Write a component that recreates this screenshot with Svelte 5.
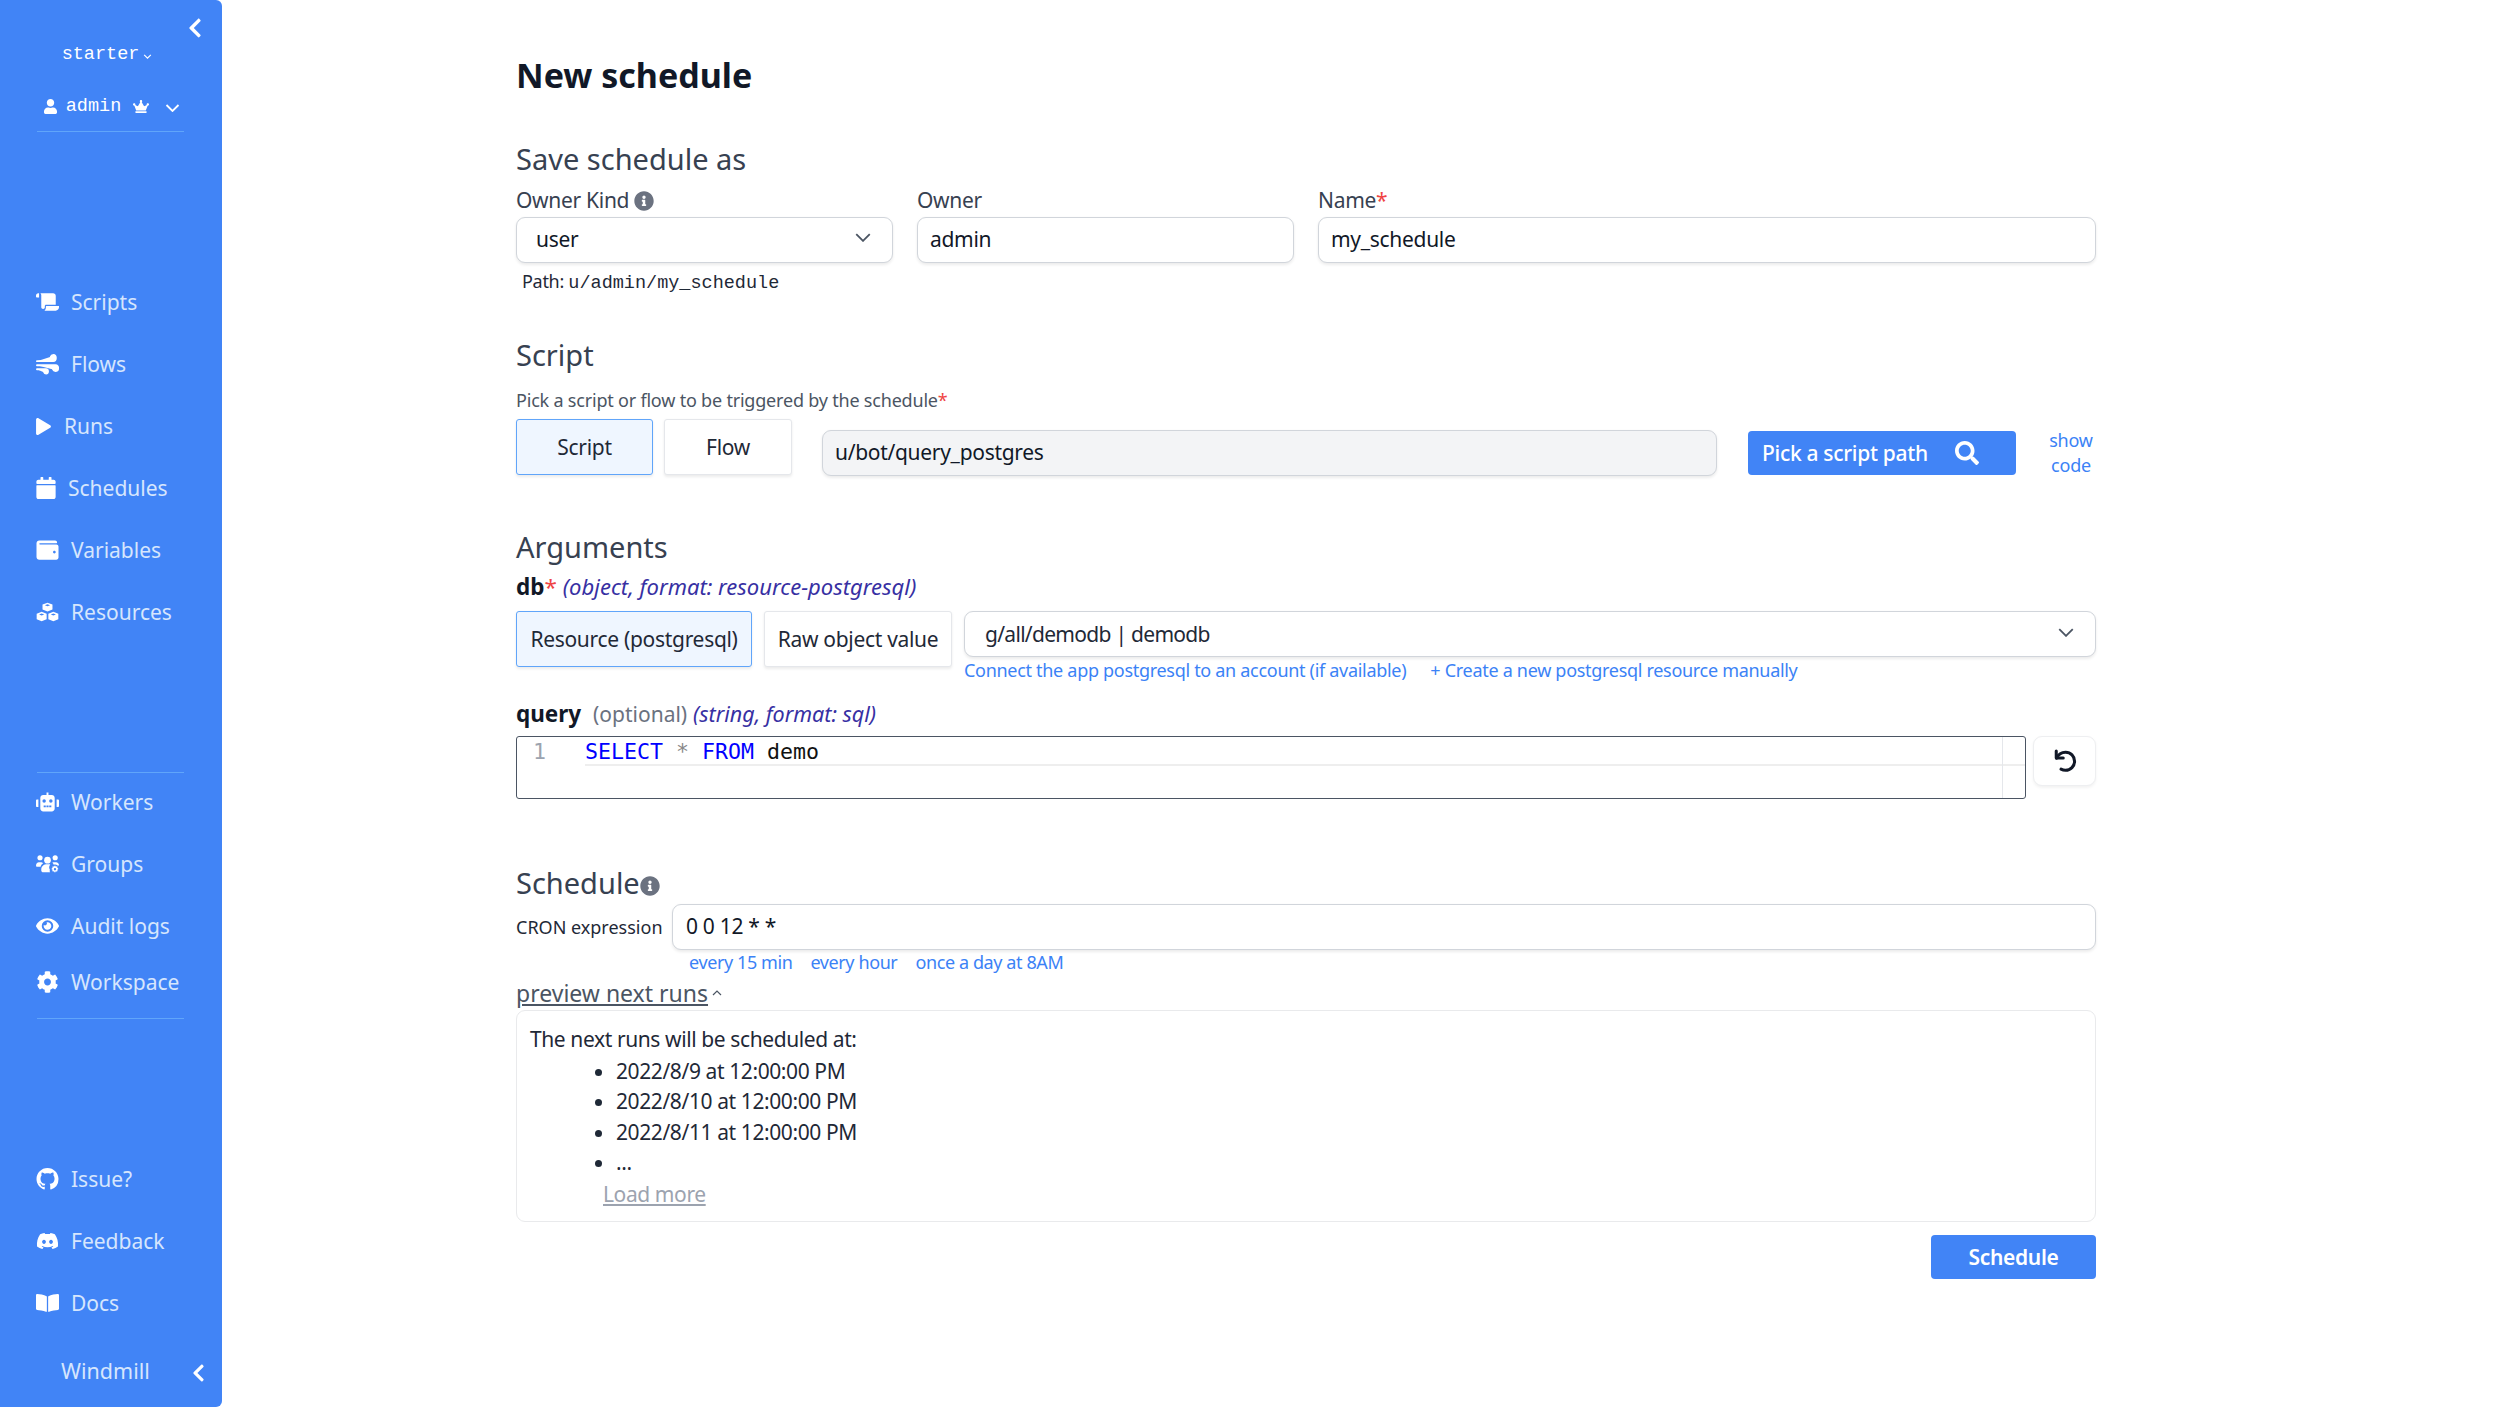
<script>
  const topLinks = [
    { label: 'Scripts', icon: 'scroll' },
    { label: 'Flows', icon: 'wind' },
    { label: 'Runs', icon: 'play' },
    { label: 'Schedules', icon: 'calendar' },
    { label: 'Variables', icon: 'wallet' },
    { label: 'Resources', icon: 'cubes' }
  ];
  const midLinks = [
    { label: 'Workers', icon: 'robot' },
    { label: 'Groups', icon: 'groups' },
    { label: 'Audit logs', icon: 'eye' }
  ];
  const footLinks = [
    { label: 'Issue?', icon: 'github' },
    { label: 'Feedback', icon: 'discord' },
    { label: 'Docs', icon: 'book' }
  ];
  const runs = ['2022/8/9 at 12:00:00 PM', '2022/8/10 at 12:00:00 PM', '2022/8/11 at 12:00:00 PM', '...'];
  const chevronLeft = 'M34.52 239.03L228.87 44.69c9.37-9.37 24.57-9.37 33.94 0l22.67 22.67c9.36 9.36 9.37 24.52.04 33.9L131.49 256l154.02 154.75c9.34 9.38 9.32 24.54-.04 33.9l-22.67 22.67c-9.37 9.37-24.57 9.37-33.94 0L34.52 272.97c-9.37-9.37-9.37-24.57 0-33.94z';
  const info = 'M256 8C119.043 8 8 119.083 8 256c0 136.997 111.043 248 248 248s248-111.003 248-248C504 119.083 392.957 8 256 8zm0 110c23.196 0 42 18.804 42 42s-18.804 42-42 42-42-18.804-42-42 18.804-42 42-42zm56 254c0 6.627-5.373 12-12 12h-88c-6.627 0-12-5.373-12-12v-24c0-6.627 5.373-12 12-12h12v-64h-12c-6.627 0-12-5.373-12-12v-24c0-6.627 5.373-12 12-12h64c6.627 0 12 5.373 12 12v100h12c6.627 0 12 5.373 12 12v24z';
</script>

{#snippet navIcon(name)}
  {#if name === 'scroll'}
    <svg class="nav-icon" viewBox="0 0 24 20"><path d="M0 3.2C0 1.800 1 .8 2.400.8h.8v4.600H1.200C.5 5.400 0 4.900 0 4.200zM4.400.8h13.400c1.600 0 2.800 1.200 2.800 2.800v9.200h-10c-.9 0-1.400.6-1.400 1.400v1.400c0 1-.8 1.800-1.800 1.800s-1.900-.8-1.900-1.800V3c0-.9-.2-1.600-.9-2.200zM10.800 14.200H24v1.400c0 1.900-1.500 3.400-3.400 3.400H8.800c1-.6 1.500-1.700 1.500-3.200v-.7c0-.5.1-.9.5-.9z"/></svg>
  {:else if name === 'wind'}
    <svg class="nav-icon" viewBox="0 0 24 22" fill="none" stroke="#fff" stroke-width="1.900" stroke-linecap="round"><path d="M1 8h17c3.600 0 3.600-6.500.2-6.500-1.500 0-2.400.8-2.700 2M1 12.300h19.400c3.700 0 3.700 6-.1 6-1.300 0-2.100-.6-2.500-1.600M1 16.500h9.400c2.800 0 2.900 4.500.2 4.500-1 0-1.700-.4-2-1.200"/></svg>
  {:else if name === 'play'}
    <svg class="nav-icon play" viewBox="0 0 448 512"><path d="M424.4 214.7L72.4 6.6C43.8-10.3 0 6.1 0 47.9V464c0 37.5 40.7 60.1 72.4 41.3l352-208c31.4-18.5 31.5-64.1 0-82.6z"/></svg>
  {:else if name === 'calendar'}
    <svg class="nav-icon cal" viewBox="0 0 448 512"><path d="M12 192h424c6.6 0 12 5.4 12 12v260c0 26.5-21.5 48-48 48H48c-26.5 0-48-21.5-48-48V204c0-6.6 5.4-12 12-12zm436-44v-36c0-26.5-21.5-48-48-48h-48V12c0-6.6-5.4-12-12-12h-40c-6.6 0-12 5.4-12 12v52H160V12c0-6.6-5.4-12-12-12h-40c-6.6 0-12 5.4-12 12v52H48C21.5 64 0 85.5 0 112v36c0 6.6 5.4 12 12 12h424c6.6 0 12-5.4 12-12z"/></svg>
  {:else if name === 'wallet'}
    <svg class="nav-icon" viewBox="0 0 512 512"><path d="M461.2 128H80c-8.84 0-16-7.16-16-16s7.16-16 16-16h384c8.84 0 16-7.16 16-16 0-26.51-21.49-48-48-48H64C28.65 32 0 60.65 0 96v320c0 35.35 28.65 64 64 64h397.2c28.02 0 50.8-21.53 50.8-48V176c0-26.47-22.78-48-50.8-48zM416 336c-17.67 0-32-14.33-32-32s14.33-32 32-32 32 14.33 32 32-14.33 32-32 32z"/></svg>
  {:else if name === 'cubes'}
    <svg class="nav-icon" viewBox="0 0 24 20"><path d="M12 .3l5.200 2v5.200L12 9.600 6.800 7.500V2.300zM12 2l-2.700 1 2.700 1.100L14.700 3zM5.900 9.800l5.200 2v5.700L5.900 19.700.7 17.500v-5.700zM18.100 9.800l5.200 2v5.700l-5.200 2.200-5.200-2.200v-5.700zM5.900 11.500l-2.700 1 2.700 1.100 2.700-1.100zM18.100 11.500l-2.700 1 2.700 1.100 2.700-1.100z" fill-rule="evenodd"/></svg>
  {:else if name === 'robot'}
    <svg class="nav-icon" viewBox="0 0 24 20"><path d="M11 0h2v2.800h3.500c1.700 0 3 1.300 3 3v11c0 1.700-1.300 3-3 3h-9c-1.700 0-3-1.300-3-3v-11c0-1.700 1.300-3 3-3H11zM8.500 7.200a1.800 1.800 0 100 3.600 1.800 1.800 0 000-3.600zM15.500 7.200a1.800 1.800 0 100 3.600 1.800 1.800 0 000-3.600zM8 13.600v1.800h2.200v-1.800zM10.900 13.600v1.800h2.200v-1.800zM13.800 13.600v1.800H16v-1.800zM0 8.500c0-.7.500-1.200 1.200-1.200h1.300v8H1.200c-.7 0-1.200-.5-1.200-1.200zM24 8.500c0-.7-.5-1.200-1.200-1.200h-1.300v8h1.300c.7 0 1.200-.5 1.200-1.200z" fill-rule="evenodd"/></svg>
  {:else if name === 'groups'}
    <svg class="nav-icon" viewBox="0 0 24 19"><circle cx="4.200" cy="3" r="2.700"/><circle cx="20" cy="3" r="2.700"/><circle cx="12" cy="5.500" r="3.500"/><path d="M0 11.500c0-2.300 1.300-3.700 3-3.700h2.400c.8 0 1.400.3 2 .8-1.400.9-2.300 2.200-2.600 3.800H1c-.6 0-1-.4-1-.9zM8 10.500c.7-.5 1.600-.8 2.500-.8h3c.5 0 1 .1 1.400.3-1.300 1.400-1.700 3.600-.4 5.500-.4 1-.2 1.900.2 2.700H7.500c-1.100 0-2-.9-2-2v-1.500c0-1.600 1-3 2.500-4.200zM19 7.800h2c1.700 0 3 1.400 3 3.200l-1.500.1c-1-.9-2.500-1.500-4-.8-.3-.9-.8-1.600-1.500-2.100.6-.3 1.300-.4 2-.4z"/><path d="M19.200 11.200l1.200.1.300 1.100 1-.6.9.9-.6 1 1.100.3v1.300l-1.100.3.600 1-.9.900-1-.6-.3 1.100h-1.300l-.3-1.100-1 .6-.9-.9.6-1-1.100-.3v-1.300l1.100-.3-.6-1 .9-.9 1 .6zM19.800 13.800a1.200 1.200 0 100 2.400 1.200 1.200 0 000-2.400z" fill-rule="evenodd"/></svg>
  {:else if name === 'eye'}
    <svg class="nav-icon" viewBox="0 0 576 512"><path d="M572.52 241.4C518.29 135.59 410.93 64 288 64S57.68 135.64 3.48 241.41a32.35 32.35 0 0 0 0 29.19C57.71 376.41 165.07 448 288 448s230.32-71.64 284.52-177.41a32.35 32.35 0 0 0 0-29.19zM288 400a144 144 0 1 1 144-144 143.93 143.93 0 0 1-144 144zm0-240a95.31 95.31 0 0 0-25.31 3.79 47.85 47.85 0 0 1-66.9 66.9A95.78 95.78 0 1 0 288 160z"/></svg>
  {:else if name === 'cog'}
    <svg class="nav-icon" viewBox="0 0 512 512"><path d="M487.4 315.7l-42.6-24.6c4.3-23.2 4.3-47 0-70.2l42.6-24.6c4.9-2.8 7.1-8.6 5.500-14-11.100-35.600-30-67.800-54.700-94.600-3.800-4.100-10-5.100-14.800-2.300L380.800 110c-17.900-15.400-38.500-27.300-60.800-35.100V25.800c0-5.600-3.900-10.500-9.400-11.700-36.700-8.200-74.300-7.800-109.200 0-5.500 1.200-9.400 6.100-9.400 11.700V75c-22.200 7.900-42.800 19.800-60.800 35.100L88.700 85.500c-4.900-2.800-11-1.900-14.800 2.300-24.700 26.700-43.600 58.900-54.700 94.600-1.700 5.400.6 11.200 5.500 14L67.300 221c-4.300 23.200-4.300 47 0 70.200l-42.600 24.600c-4.900 2.800-7.100 8.600-5.500 14 11.100 35.600 30 67.800 54.700 94.600 3.800 4.100 10 5.100 14.800 2.300l42.600-24.600c17.900 15.400 38.500 27.300 60.800 35.100v49.200c0 5.600 3.900 10.500 9.400 11.700 36.700 8.200 74.300 7.800 109.200 0 5.500-1.200 9.400-6.100 9.400-11.700v-49.200c22.200-7.900 42.800-19.800 60.800-35.100l42.600 24.600c4.900 2.800 11 1.900 14.800-2.300 24.700-26.700 43.600-58.900 54.700-94.600 1.500-5.500-.7-11.300-5.600-14.100zM256 336c-44.100 0-80-35.900-80-80s35.900-80 80-80 80 35.900 80 80-35.900 80-80 80z"/></svg>
  {:else if name === 'github'}
    <svg class="nav-icon" viewBox="0 0 16 16"><path d="M8 0C3.58 0 0 3.58 0 8c0 3.54 2.290 6.530 5.470 7.590.4.070.55-.17.55-.38 0-.19-.01-.82-.01-1.490-2.010.37-2.530-.49-2.690-.94-.09-.23-.48-.94-.82-1.130-.28-.15-.68-.52-.01-.53.63-.01 1.080.58 1.230.82.72 1.210 1.870.87 2.330.66.07-.52.28-.87.51-1.070-1.780-.2-3.640-.89-3.640-3.950 0-.87.31-1.590.82-2.150-.08-.2-.36-1.020.08-2.120 0 0 .67-.21 2.200.82.64-.18 1.320-.27 2-.27.68 0 1.360.09 2 .27 1.530-1.040 2.200-.82 2.200-.82.44 1.100.16 1.920.08 2.120.51.56.82 1.270.82 2.150 0 3.070-1.870 3.750-3.650 3.950.29.25.54.73.54 1.480 0 1.070-.01 1.930-.01 2.200 0 .21.15.46.55.38A8.013 8.013 0 0016 8c0-4.420-3.580-8-8-8z"/></svg>
  {:else if name === 'discord'}
    <svg class="nav-icon" viewBox="0 0 640 512"><path d="M524.531,69.836a1.5,1.5,0,0,0-.764-.7A485.065,485.065,0,0,0,404.081,32.03a1.816,1.816,0,0,0-1.923.91,337.461,337.461,0,0,0-14.9,30.6,447.848,447.848,0,0,0-134.426,0,309.541,309.541,0,0,0-15.135-30.6,1.89,1.89,0,0,0-1.924-.91A483.689,483.689,0,0,0,116.085,69.137a1.712,1.712,0,0,0-.788.676C39.068,183.651,18.186,294.69,28.43,404.354a2.016,2.016,0,0,0,.765,1.375A487.666,487.666,0,0,0,176.02,479.918a1.9,1.9,0,0,0,2.063-.676A348.2,348.2,0,0,0,208.12,430.4a1.86,1.86,0,0,0-1.019-2.588,321.173,321.173,0,0,1-45.868-21.853,1.885,1.885,0,0,1-.185-3.126c3.082-2.309,6.166-4.711,9.109-7.137a1.819,1.819,0,0,1,1.9-.256c96.229,43.917,200.41,43.917,295.5,0a1.812,1.812,0,0,1,1.924.233c2.944,2.426,6.027,4.851,9.132,7.16a1.884,1.884,0,0,1-.162,3.126,301.407,301.407,0,0,1-45.89,21.83,1.875,1.875,0,0,0-1,2.611,391.055,391.055,0,0,0,30.014,48.815,1.864,1.864,0,0,0,2.063.7A486.048,486.048,0,0,0,610.7,405.729a1.882,1.882,0,0,0,.765-1.352C623.729,277.594,590.933,167.465,524.531,69.836ZM222.491,337.58c-28.972,0-52.844-26.587-52.844-59.239S193.056,219.1,222.491,219.1c29.665,0,53.306,26.82,52.843,59.239C275.334,310.993,251.924,337.58,222.491,337.58Zm195.38,0c-28.971,0-52.843-26.587-52.843-59.239S388.437,219.1,417.871,219.1c29.667,0,53.307,26.82,52.844,59.239C470.715,310.993,447.538,337.58,417.871,337.58Z"/></svg>
  {:else if name === 'book'}
    <svg class="nav-icon" viewBox="0 0 576 512"><path d="M542.22 32.05c-54.8 3.11-163.72 14.43-230.96 55.59-4.64 2.84-7.27 7.89-7.27 13.17v363.87c0 11.55 12.63 18.85 23.28 13.49 69.18-34.82 169.23-44.32 218.7-46.92 16.89-.89 30.02-14.43 30.02-30.66V62.75c.01-17.71-15.35-31.74-33.77-30.7zM264.73 87.64C197.5 46.48 88.58 35.17 33.78 32.05 15.36 31.01 0 45.04 0 62.75V400.6c0 16.24 13.13 29.78 30.02 30.66 49.49 2.6 149.59 12.11 218.77 46.95 10.62 5.35 23.21-1.94 23.21-13.46V100.63c0-5.29-2.62-10.1-7.27-12.99z"/></svg>
  {/if}
{/snippet}

{#snippet navLink(l)}
  <a class="nav-link" href="#top">{@render navIcon(l.icon)}<span>{l.label}</span></a>
{/snippet}

<div class="page">
  <aside class="sidebar">
    <div class="collapse-row">
      <svg class="chev-left" viewBox="0 0 320 512"><path d={chevronLeft} /></svg>
    </div>
    <div class="workspace">starter<svg class="mini-chev" viewBox="0 0 10 6"><path d="M1 1l4 4 4-4" /></svg></div>
    <div class="user-row">
      <svg class="user-icon" viewBox="0 0 448 512"><path d="M224 256c70.7 0 128-57.3 128-128S294.7 0 224 0 96 57.3 96 128s57.3 128 128 128zm89.6 32h-16.7c-22.2 10.2-46.9 16-72.9 16s-50.6-5.8-72.9-16h-16.7C60.2 288 0 348.2 0 422.4V464c0 26.5 21.5 48 48 48h352c26.5 0 48-21.5 48-48v-41.6c0-74.2-60.2-134.4-134.4-134.4z"/></svg>
      <span>admin</span>
      <svg class="crown" viewBox="0 0 640 512"><path d="M528 448H112c-8.8 0-16 7.2-16 16v32c0 8.8 7.2 16 16 16h416c8.8 0 16-7.2 16-16v-32c0-8.8-7.2-16-16-16zm64-320c-26.5 0-48 21.5-48 48 0 7.1 1.6 13.7 4.4 19.8L476 239.2c-15.4 9.2-35.3 4-44.2-11.6L350.3 85C361 76.2 368 63 368 48c0-26.5-21.5-48-48-48s-48 21.5-48 48c0 15 7 28.2 17.7 37l-81.5 142.600c-8.9 15.600-28.9 20.800-44.200 11.600l-72.300-43.400c2.700-6 4.400-12.700 4.400-19.800 0-26.500-21.500-48-48-48S0 149.500 0 176s21.500 48 48 48c2.600 0 5.200-.4 7.700-.8L128 416h384l72.300-192.800c2.500.4 5.100.8 7.700.8 26.500 0 48-21.500 48-48s-21.500-48-48-48z"/></svg>
      <svg class="user-chev" viewBox="0 0 14 8"><path d="M1 1l6 6 6-6" /></svg>
    </div>
    <div class="rule first"></div>

    <nav class="nav-group top">
      {#each topLinks as l}{@render navLink(l)}{/each}
    </nav>

    <div class="rule mid"></div>
    <nav class="nav-group mids">
      {#each midLinks as l}{@render navLink(l)}{/each}
      <a class="nav-link workspace-link" href="#top">{@render navIcon('cog')}<span>Workspace</span></a>
    </nav>
    <div class="rule last"></div>

    <nav class="nav-group foot">
      {#each footLinks as l}{@render navLink(l)}{/each}
    </nav>

    <div class="brand">
      <span>Windmill</span>
      <svg class="chev-left small" viewBox="0 0 320 512"><path d={chevronLeft} /></svg>
    </div>
  </aside>

  <main class="content">
    <h1>New schedule</h1>

    <h2 class="save-title">Save schedule as</h2>
    <div class="owner-grid">
      <div class="field">
        <span class="label">Owner Kind <svg class="info" viewBox="0 0 512 512"><path d={info} /></svg></span>
        <div class="input select-box kind"><span>user</span><svg class="sel-chev" viewBox="0 0 14 8"><path d="M1 1l6 6 6-6" /></svg></div>
      </div>
      <div class="field">
        <span class="label">Owner</span>
        <div class="input">admin</div>
      </div>
      <div class="field name-field">
        <span class="label">Name<span class="req">*</span></span>
        <div class="input">my_schedule</div>
      </div>
    </div>
    <div class="path">Path: <code>u/admin/my_schedule</code></div>

    <h2 class="script-title">Script</h2>
    <p class="hint">Pick a script or flow to be triggered by the schedule<span class="req">*</span></p>
    <div class="script-row">
      <button class="toggle on script-btn">Script</button>
      <button class="toggle flow-btn">Flow</button>
      <div class="input path-input">u/bot/query_postgres</div>
      <button class="pick">Pick a script path
        <svg viewBox="0 0 512 512"><path d="M505 442.7L405.3 343c-4.5-4.5-10.6-7-17-7H372c27.6-35.3 44-79.7 44-128C416 93.1 322.9 0 208 0S0 93.1 0 208s93.1 208 208 208c48.3 0 92.7-16.4 128-44v16.3c0 6.4 2.5 12.5 7 17l99.700 99.700c9.400 9.400 24.600 9.400 33.900 0l28.300-28.300c9.400-9.400 9.400-24.600.1-34zM208 336c-70.700 0-128-57.200-128-128 0-70.700 57.200-128 128-128 70.700 0 128 57.200 128 128 0 70.700-57.200 128-128 128z"/></svg>
      </button>
      <a class="show-code" href="#top">show<br />code</a>
    </div>

    <h2 class="args-title">Arguments</h2>
    <div class="arg-head"><b>db</b><span class="req">*</span> <i>(object, format: resource-postgresql)</i></div>
    <div class="db-row">
      <button class="toggle on res-btn">Resource (postgresql)</button>
      <button class="toggle raw-btn">Raw object value</button>
      <div class="db-select">
        <div class="input select-box"><span class="db-text">g/all/demodb | demodb</span><svg class="sel-chev" viewBox="0 0 14 8"><path d="M1 1l6 6 6-6" /></svg></div>
        <div class="links db-links"><a href="#top">Connect the app postgresql to an account (if available)</a><a href="#top">+ Create a new postgresql resource manually</a></div>
      </div>
    </div>
    <div class="arg-head query-head"><b>query</b> <span class="optional">(optional)</span> <i>(string, format: sql)</i></div>
    <div class="query-row">
      <div class="editor">
        <div class="gutter">1</div>
        <div class="code-line"><span class="kw">SELECT</span> <span class="op">*</span> <span class="kw">FROM</span> demo</div>
        <div class="ruler"></div>
      </div>
      <button class="reset" aria-label="reset">
        <svg viewBox="0 0 24 24" fill="none" stroke="#111827" stroke-width="2.6" stroke-linecap="round" stroke-linejoin="round"><path d="M4.500 3.500v6h6"/><path d="M4.800 9.500C6.300 6.300 9.200 4.500 12.500 4.500c4.400 0 7.700 3.400 7.700 7.700s-3.400 7.800-7.700 7.800c-1.500 0-2.800-.4-3.900-1"/></svg>
      </button>
    </div>

    <h2 class="schedule-title">Schedule<svg class="info" viewBox="0 0 512 512"><path d={info} /></svg></h2>
    <div class="cron-row">
      <span class="cron-label">CRON expression</span>
      <div class="input cron-input">0 0 12 * *</div>
    </div>
    <div class="links cron-links"><a href="#top">every 15 min</a><a href="#top">every hour</a><a href="#top">once a day at 8AM</a></div>
    <div class="preview-toggle"><a href="#top">preview next runs</a><svg viewBox="0 0 10 6"><path d="M1 5l4-4 4 4" /></svg></div>
    <div class="runs-box">
      <div>The next runs will be scheduled at:</div>
      <ul>
        {#each runs as r}<li>{r}</li>{/each}
      </ul>
      <a class="load-more" href="#top">Load more</a>
    </div>
    <div class="submit-row"><button class="submit">Schedule</button></div>
  </main>
</div>

<style>
  :global(body) {
    margin: 0;
    background: #fff;
    font-family: "Noto Sans", sans-serif;
    color: #111827;
  }
  .page {
    display: flex;
    height: 1407px;
    overflow: hidden;
  }

  /* sidebar */
  .sidebar {
    width: 222px;
    flex: none;
    box-sizing: border-box;
    background: #4184f6;
    border-radius: 0 6px 6px 0;
    padding: 0 36px;
    display: flex;
    flex-direction: column;
    color: #d6e6fd;
    font-size: 21px;
  }
  .collapse-row {
    display: flex;
    justify-content: flex-end;
    height: 43px;
    padding: 17px 0 0;
    margin-right: -16px;
    box-sizing: border-box;
  }
  .chev-left {
    width: 14px;
    height: 22px;
    fill: #fff;
  }
  .workspace {
    font-family: "Liberation Mono", monospace;
    font-size: 18.500px;
    color: #fff;
    text-align: center;
    height: 24px;
    line-height: 24px;
    padding-right: 8px;
  }
  .mini-chev {
    width: 9px;
    height: 5px;
    margin-left: 4px;
    fill: none;
    stroke: #fff;
    stroke-width: 1.4;
  }
  .user-row {
    display: flex;
    align-items: center;
    justify-content: center;
    font-family: "Liberation Mono", monospace;
    font-size: 18.500px;
    color: #fff;
    height: 26px;
    margin-top: 26px;
    gap: 9px;
    padding-left: 2px;
  }
  .user-icon {
    width: 13px;
    height: 15px;
    fill: #fff;
  }
  .crown {
    width: 16px;
    height: 13px;
    fill: #fff;
    margin-left: 3px;
  }
  .user-chev {
    width: 15px;
    height: 8px;
    fill: none;
    stroke: #fff;
    stroke-width: 1.8;
    margin-left: 7px;
    margin-top: 4px;
  }
  .rule {
    height: 1px;
    background: #60a5fa;
    margin-right: 2px;
    margin-left: 1px;
  }
  .rule.first { margin-top: 12px; }
  .nav-group { display: flex; flex-direction: column; }
  .nav-group.top { margin-top: 154px; gap: 30px; }
  .rule.mid { margin-top: 144px; }
  .nav-group.mids { margin-top: 13px; gap: 30px; }
  .rule.last { margin-top: 20px; }
  .nav-group.foot { margin-top: 144px; gap: 30px; }
  .nav-link {
    display: flex;
    align-items: center;
    gap: 12px;
    height: 32px;
    color: #d6e6fd;
    text-decoration: none;
    white-space: nowrap;
  }
  .workspace-link { margin-top: -6px; }
  .nav-icon {
    width: 23px;
    height: 22px;
    fill: #fff;
    flex: none;
  }
  .nav-icon.play { width: 15px; height: 17px; margin-right: 1px; }
  .nav-icon.cal { width: 20px; }
  .brand {
    display: flex;
    align-items: center;
    justify-content: space-between;
    margin-top: 37px;
    padding-left: 25px;
    margin-right: -19px;
    font-size: 21.5px;
    color: #d6e6fd;
  }
  .chev-left.small { width: 13px; height: 20px; margin-top: 4px; }

  /* main */
  .content {
    width: 1580px;
    margin-left: 294px;
    padding-top: 51.500px;
    flex: none;
    font-size: 21px;
    letter-spacing: -0.3px;
    color: #1f2937;
  }
  h1 {
    font-size: 34px;
    line-height: 46px;
    font-weight: 700;
    margin: 0;
    color: #111827;
    letter-spacing: 0;
  }
  h2 {
    font-size: 29px;
    line-height: 38px;
    font-weight: 400;
    margin: 0;
    color: #374151;
    letter-spacing: 0;
  }
  .save-title { margin-top: 42px; }
  .owner-grid {
    display: grid;
    grid-template-columns: 377px 377px 778px;
    gap: 24px;
    margin-top: 7px;
  }
  .field { display: flex; flex-direction: column; }
  .label {
    font-size: 21px;
    line-height: 31px;
    color: #374151;
    display: flex;
    align-items: center;
    gap: 5px;
    height: 32px;
  }
  .name-field .label { gap: 0; }
  .info {
    width: 20px;
    height: 20px;
    fill: #6b7280;
    flex: none;
  }
  .req { color: #ef4444; }
  .input {
    box-sizing: border-box;
    height: 46px;
    border: 1.5px solid #d1d5db;
    border-radius: 9px;
    padding: 0 12px;
    line-height: 43px;
    background: #fff;
    color: #111827;
    box-shadow: 0 1.5px 3px rgba(0, 0, 0, 0.08);
    white-space: nowrap;
  }
  .select-box {
    display: flex;
    align-items: center;
    justify-content: space-between;
    padding: 0 20px;
  }
  .select-box.kind { padding-left: 19px; }
  .sel-chev {
    width: 16px;
    height: 9px;
    fill: none;
    stroke: #4b5563;
    stroke-width: 1.6;
    margin-right: 1px;
    margin-top: -4px;
  }
  .path {
    margin: 4px 0 0 6px;
    font-size: 18px;
    line-height: 28px;
  }
  code {
    font-family: "Liberation Mono", monospace;
    font-size: 18.500px;
    letter-spacing: 0;
  }
  .script-title { margin-top: 38px; }
  .hint {
    margin: 13px 0 0;
    font-size: 18px;
    letter-spacing: -0.2px;
    line-height: 26px;
    color: #4b5563;
  }
  .script-row {
    display: flex;
    align-items: flex-end;
    margin-top: 6px;
    height: 56px;
  }
  .toggle {
    font: inherit;
    letter-spacing: inherit;
    box-sizing: border-box;
    background: #fff;
    border: 1.5px solid #e5e7eb;
    border-radius: 3px;
    color: #1f2937;
    height: 56px;
    padding: 0;
    box-shadow: 0 1.5px 3px rgba(0, 0, 0, 0.08);
  }
  .toggle.on {
    background: #eff6ff;
    border-color: #60a5fa;
  }
  .script-btn { width: 137px; }
  .flow-btn { width: 128px; margin-left: 11px; }
  .path-input {
    width: 895px;
    margin-left: 30px;
    margin-bottom: -1px;
    background: #f3f4f6;
    padding: 0 12px;
  }
  .pick {
    font: inherit;
    letter-spacing: inherit;
    font-weight: 500;
    width: 268px;
    height: 44px;
    box-sizing: border-box;
    margin-left: 31px;
    margin-bottom: 0;
    padding: 0 37px 0 14px;
    border: none;
    border-radius: 4px;
    background: #4184f6;
    color: #fff;
    display: flex;
    align-items: center;
    justify-content: space-between;
  }
  .pick svg { width: 24px; height: 24px; fill: #fff; }
  .show-code {
    flex: 1;
    text-align: center;
    font-size: 18px;
    letter-spacing: -0.2px;
    line-height: 25px;
    color: #3b82f6;
    text-decoration: none;
    padding-left: 30px;
    margin-bottom: -3px;
  }
  .args-title { margin-top: 53.500px; }
  .arg-head {
    margin-top: 4px;
    line-height: 32px;
    color: #111827;
    font-size: 22.500px;
    letter-spacing: 0;
  }
  .arg-head b { font-weight: 700; }
  .arg-head i {
    font-size: 22px;
    color: #3730a3;
  }
  .db-row {
    display: flex;
    align-items: flex-start;
    margin-top: 8px;
  }
  .res-btn { width: 236px; }
  .raw-btn { width: 188px; margin-left: 12px; }
  .db-select { flex: 1; margin-left: 12px; }
  .db-text { color: #1f2937; letter-spacing: -0.7px; }
  .links a {
    color: #3b82f6;
    text-decoration: none;
    font-size: 18px;
    letter-spacing: -0.3px;
  }
  .cron-links a { letter-spacing: -0.4px; }
  .db-links {
    display: flex;
    gap: 24px;
    line-height: 26px;
  }
  .query-head { margin-top: 14.500px; }
  .query-head i { font-size: 21.500px; }
  .optional {
    font-size: 21px;
    color: #6b7280;
    margin-left: 6px;
  }
  .query-row {
    display: flex;
    justify-content: space-between;
    margin-top: 6px;
  }
  .editor {
    box-sizing: border-box;
    width: 1510px;
    height: 63px;
    border: 1.5px solid #4b5563;
    border-left-width: 1px;
    border-radius: 3px;
    display: flex;
    position: relative;
    font-family: "DejaVu Sans Mono", monospace;
    font-size: 21.600px;
    letter-spacing: 0;
    line-height: 30px;
  }
  .gutter {
    width: 68px;
    flex: none;
    color: #9ca3af;
    padding-left: 16px;
    box-sizing: border-box;
  }
  .code-line {
    flex: 1;
    height: 27px;
    border-bottom: 2px solid #eeeeee;
    color: #111;
  }
  .kw { color: #0000ff; }
  .op { color: #888; }
  .ruler {
    position: absolute;
    top: 0;
    bottom: 0;
    right: 22px;
    width: 1px;
    background: #e5e7eb;
  }
  .reset {
    width: 63px;
    height: 50px;
    box-sizing: border-box;
    border: 1.5px solid #eeeff1;
    border-radius: 9px;
    background: #fff;
    padding: 0;
    display: flex;
    align-items: center;
    justify-content: center;
    box-shadow: 0 1.5px 3px rgba(0, 0, 0, 0.05);
  }
  .reset svg { width: 28px; height: 28px; }
  .schedule-title {
    margin-top: 65px;
    display: flex;
    align-items: flex-end;
  }
  .schedule-title .info { margin-bottom: 6px; }
  .cron-row {
    display: flex;
    align-items: center;
    margin-top: 2px;
  }
  .cron-label {
    width: 156px;
    flex: none;
    font-size: 18px;
    letter-spacing: 0;
    color: #1f2937;
  }
  .cron-input { flex: 1; padding: 0 13px; }
  .cron-links {
    margin-left: 173px;
    display: flex;
    gap: 18px;
    line-height: 26px;
    margin-top: -1px;
  }
  .preview-toggle {
    display: flex;
    align-items: center;
    gap: 4px;
    line-height: 30px;
    margin-top: 3px;
    font-size: 23px;
    letter-spacing: 0;
  }
  .preview-toggle a { color: #4b5563; }
  .preview-toggle svg {
    width: 10px;
    height: 6px;
    fill: none;
    stroke: #4b5563;
    stroke-width: 1.2;
  }
  .runs-box {
    box-sizing: border-box;
    height: 212px;
    margin-top: 2px;
    border: 1.5px solid #e9eaec;
    border-radius: 9px;
    padding: 13px;
    line-height: 30px;
    color: #1f2937;
    letter-spacing: -0.4px;
  }
  ul {
    margin: 2px 0 0;
    padding-left: 86px;
  }
  li { height: 30.5px; }
  .load-more {
    display: inline-block;
    margin-top: 1px;
    margin-left: 73px;
    color: #9ca3af;
  }
  .submit-row {
    display: flex;
    justify-content: flex-end;
    margin-top: 13px;
  }
  .submit {
    font: inherit;
    letter-spacing: inherit;
    font-weight: 600;
    width: 165px;
    height: 44px;
    border: none;
    border-radius: 4px;
    background: #4184f6;
    color: #fff;
  }
</style>
